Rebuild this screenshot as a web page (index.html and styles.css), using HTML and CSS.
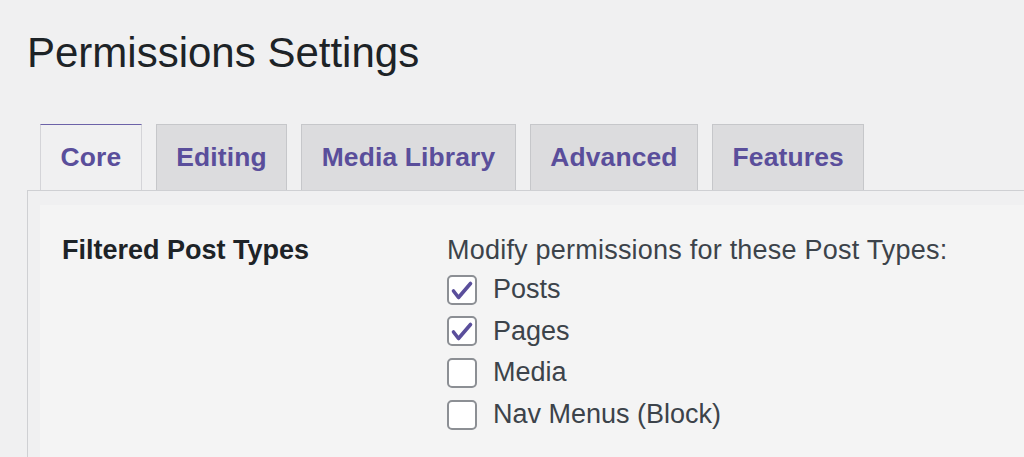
FILE: index.html
```html
<!DOCTYPE html>
<html lang="en">
<head>
<meta charset="utf-8">
<title>Permissions Settings</title>
<link rel="stylesheet" href="styles.css">
</head>
<body>
<div class="wrap">
  <h1 class="title">Permissions Settings</h1>
  <nav class="tabs">
    <a class="tab active" href="#">Core</a>
    <a class="tab" href="#">Editing</a>
    <a class="tab" href="#">Media Library</a>
    <a class="tab" href="#">Advanced</a>
    <a class="tab" href="#">Features</a>
  </nav>
  <div class="panel">
    <div class="inner">
      <div class="label">Filtered Post Types</div>
      <div class="field">
        <div class="desc">Modify permissions for these Post Types:</div>
        <label class="opt"><span class="box checked"><svg viewBox="0 0 30 30" width="30" height="30"><path d="M6.5 16 L11.5 22.5 L23.5 8.5" fill="none" stroke="#5a4e9b" stroke-width="3.6" stroke-linecap="round" stroke-linejoin="round"/></svg></span>Posts</label>
        <label class="opt"><span class="box checked"><svg viewBox="0 0 30 30" width="30" height="30"><path d="M6.5 16 L11.5 22.5 L23.5 8.5" fill="none" stroke="#5a4e9b" stroke-width="3.6" stroke-linecap="round" stroke-linejoin="round"/></svg></span>Pages</label>
        <label class="opt"><span class="box"></span>Media</label>
        <label class="opt"><span class="box"></span>Nav Menus (Block)</label>
      </div>
    </div>
  </div>
</div>
</body>
</html>
```
FILE: styles.css
```css
html, body {
  margin: 0;
  padding: 0;
  background: #f0f0f1;
  overflow: hidden;
}
body {
  font-family: "Liberation Sans", Arial, sans-serif;
  color: #3c434a;
}
.wrap {
  box-sizing: border-box;
  height: 100vh;
  display: flex;
  flex-direction: column;
  padding: 26px 0 0 27px;
}
.title {
  margin: 0;
  font-size: 42px;
  line-height: 54px;
  font-weight: 400;
  color: #1d2327;
}
.tabs {
  display: flex;
  gap: 14px;
  margin: 44px 0 0 13px;
  height: 66px;
  flex: none;
}
.tab {
  display: flex;
  align-items: center;
  box-sizing: border-box;
  height: 66px;
  padding: 0 19.5px;
  border: 1px solid #c6c7ca;
  border-bottom: none;
  background: #dcdcde;
  color: #5a4e9b;
  font-size: 26.4px;
  letter-spacing: 0.15px;
  font-weight: 700;
  text-decoration: none;
}
.tab.active {
  background: #f0f0f1;
  border-top: 1.5px solid #6c62a8;
  border-left-color: #d4d4d8;
  border-right-color: #d4d4d8;
}
.panel {
  flex: 1;
  min-height: 0;
  border-top: 1px solid #cfd0d3;
  border-left: 1px solid #cfd0d3;
  padding: 14px 0 0 12px;
  display: flex;
}
.inner {
  flex: 1;
  background: #f4f4f4;
  display: flex;
  padding-top: 27px;
  box-sizing: border-box;
}
.label {
  width: 385px;
  padding-left: 22px;
  font-size: 27px;
  line-height: 36px;
  font-weight: 700;
  color: #1d2327;
}
.field {
  display: flex;
  flex-direction: column;
}
.desc {
  font-size: 27px;
  line-height: 36px;
  letter-spacing: 0.22px;
  color: #3c434a;
}
.opt {
  display: flex;
  align-items: center;
  gap: 16px;
  height: 41.6px;
  font-size: 27px;
  color: #3c434a;
}
.opt:first-of-type {
  margin-top: 1px;
}
.box {
  box-sizing: border-box;
  width: 30px;
  height: 30px;
  border: 2px solid #8c8f94;
  border-radius: 5px;
  background: #fff;
  position: relative;
  flex: none;
}
.box svg {
  position: absolute;
  left: -2px;
  top: -2px;
}
```
